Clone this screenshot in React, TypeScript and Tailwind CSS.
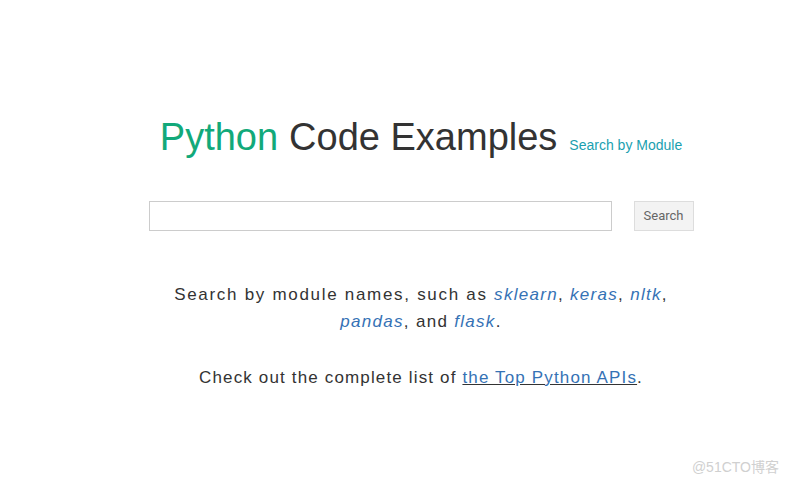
export default function App() {
  return (
    <div className="relative w-[789px] h-[487px] bg-white overflow-hidden" style={{ fontFamily: '"Liberation Sans", Arial, sans-serif' }}>
      <div className="flex flex-col items-center pl-[53px]">
        <div className="mt-[116px] flex items-baseline h-[42px]">
          <span className="text-[38px] leading-[42px] text-[#12a97a]">Python</span>
          <span className="text-[38px] leading-[42px] text-[#333333] ml-[11px]">Code Examples</span>
          <span className="text-[14px] text-[#1a9fb0] ml-[12px]">Search by Module</span>
        </div>
        <div className="mt-[43px] flex items-center">
          <input className="w-[463px] h-[30px] border border-[#cccccc] bg-white outline-none" />
          <button className="ml-[22px] w-[60px] h-[30px] border border-[#dddddd] bg-[#f3f3f3] text-[13px] text-[#666666]" style={{ fontFamily: 'Roboto, "Liberation Sans", sans-serif' }}>Search</button>
        </div>
        <p className="mt-[50px] text-center text-[17px] leading-[27px] tracking-[1.3px] text-[#333333] w-[600px]">
          <span className="tracking-[1.7px]">Search by module names, such as </span><a className="italic text-[#3572b5]">sklearn</a>, <a className="italic text-[#3572b5]">keras</a>, <a className="italic text-[#3572b5]">nltk</a>,
          <br />
          <a className="italic text-[#3572b5]">pandas</a>, and <a className="italic text-[#3572b5]">flask</a>.
        </p>
        <p className="mt-[29px] text-center text-[17px] leading-[27px] tracking-[1.15px] text-[#333333]">
          Check out the complete list of <a className="text-[#3572b5] underline decoration-[#333333]">the Top Python APIs</a>.
        </p>
      </div>
      <div className="absolute right-[10px] bottom-[9px] text-[14px] text-[#d0d0d0]" style={{ fontFamily: '"Liberation Sans", "Noto Sans CJK SC", sans-serif' }}>@51CTO博客</div>
    </div>
  );
}
